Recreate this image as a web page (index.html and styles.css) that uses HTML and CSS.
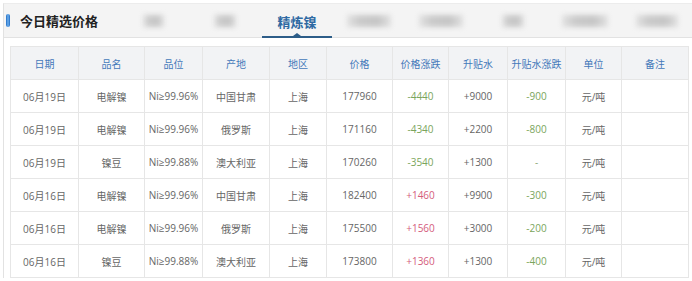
FILE: index.html
```html
<!DOCTYPE html>
<html lang="zh-CN">
<head>
<meta charset="utf-8">
<title>今日精选价格</title>
<link rel="stylesheet" href="styles.css">
</head>
<body>
<div class="panel">
  <div class="head">
    <span class="bar-icon"></span>
    <h2 class="title">今日精选价格</h2>
    <ul class="tabs">
      <li class="tab"><span class="blur w23"></span></li>
      <li class="tab"><span class="blur w24"></span></li>
      <li class="tab active"><span class="tab-label">精炼镍</span></li>
      <li class="tab"><span class="blur w46"></span></li>
      <li class="tab"><span class="blur w46"></span></li>
      <li class="tab"><span class="blur w24"></span></li>
      <li class="tab"><span class="blur w48"></span></li>
      <li class="tab"><span class="blur w44"></span></li>
    </ul>
  </div>
  <div class="content">
    <table class="price-table">
      <colgroup>
        <col class="c68"><col class="c66"><col class="c58"><col class="c67"><col class="c57"><col class="c66"><col class="c56"><col class="c59"><col class="c58"><col class="c56"><col class="c67">
      </colgroup>
      <thead>
        <tr><th>日期</th><th>品名</th><th>品位</th><th>产地</th><th>地区</th><th>价格</th><th>价格涨跌</th><th>升贴水</th><th>升贴水涨跌</th><th>单位</th><th>备注</th></tr>
      </thead>
      <tbody>
        <tr><td>06月19日</td><td>电解镍</td><td>Ni≥99.96%</td><td>中国甘肃</td><td>上海</td><td>177960</td><td class="down">-4440</td><td>+9000</td><td class="down">-900</td><td>元/吨</td><td></td></tr>
        <tr><td>06月19日</td><td>电解镍</td><td>Ni≥99.96%</td><td>俄罗斯</td><td>上海</td><td>171160</td><td class="down">-4340</td><td>+2200</td><td class="down">-800</td><td>元/吨</td><td></td></tr>
        <tr><td>06月19日</td><td>镍豆</td><td>Ni≥99.88%</td><td>澳大利亚</td><td>上海</td><td>170260</td><td class="down">-3540</td><td>+1300</td><td class="flat">-</td><td>元/吨</td><td></td></tr>
        <tr><td>06月16日</td><td>电解镍</td><td>Ni≥99.96%</td><td>中国甘肃</td><td>上海</td><td>182400</td><td class="up">+1460</td><td>+9900</td><td class="down">-300</td><td>元/吨</td><td></td></tr>
        <tr><td>06月16日</td><td>电解镍</td><td>Ni≥99.96%</td><td>俄罗斯</td><td>上海</td><td>175500</td><td class="up">+1560</td><td>+3000</td><td class="down">-200</td><td>元/吨</td><td></td></tr>
        <tr><td>06月16日</td><td>镍豆</td><td>Ni≥99.88%</td><td>澳大利亚</td><td>上海</td><td>173800</td><td class="up">+1360</td><td>+1300</td><td class="down">-400</td><td>元/吨</td><td></td></tr>
      </tbody>
    </table>
  </div>
</div>
</body>
</html>
```
FILE: styles.css
```css
html, body {
  margin: 0;
  padding: 0;
  background: #ffffff;
}
body {
  font-family: "Open Sans", "Noto Sans CJK SC", sans-serif;
  color: #666;
  overflow: hidden;
}
.panel {
  margin: 3px 0 0 3px;
  border-left: 1px solid #e2e2e2;
  border-top: 1px solid #ececec;
}
.head {
  display: flex;
  align-items: center;
  height: 33px;
  background: #f4f4f4;
  border-bottom: 1px solid #e2e2e2;
}
.bar-icon {
  flex: none;
  width: 4px;
  height: 13px;
  margin-left: 2px;
  border-radius: 2px;
  background: linear-gradient(90deg, #1f6cc4 0%, #6fb0ee 50%, #1f6cc4 100%);
}
.title {
  flex: none;
  width: 97px;
  margin: 0 0 0 10px;
  font-family: "Noto Sans CJK SC", sans-serif;
  font-size: 13px;
  font-weight: bold;
  color: #222;
  line-height: 33px;
}
.tabs {
  display: flex;
  list-style: none;
  margin: 0;
  padding: 0;
  height: 33px;
}
.tab {
  position: relative;
  width: 72px;
  height: 33px;
  display: flex;
  align-items: center;
  justify-content: center;
}
.tab-label {
  font-family: "Noto Sans CJK SC", sans-serif;
  font-size: 13px;
  font-weight: bold;
  color: #2f6aa3;
  margin-top: 1px;
}
.tab.active::after {
  content: "";
  position: absolute;
  left: 1px;
  right: 1px;
  bottom: -1px;
  height: 2px;
  background: #2d5d88;
}
.tab.active::before {
  content: "";
  position: absolute;
  left: 50%;
  bottom: 1px;
  margin-left: -4px;
  border-left: 4px solid transparent;
  border-right: 4px solid transparent;
  border-bottom: 3px solid #2d5d88;
}
.blur {
  display: block;
  height: 12px;
  background: linear-gradient(90deg, #e2e2e2 0%, #cacaca 30%, #c6c6c6 70%, #e2e2e2 100%);
  filter: blur(2.5px);
  margin-top: 1px;
}
.w23 { width: 21px; }
.w24 { width: 22px; }
.w44 { width: 42px; }
.w46 { width: 44px; }
.w48 { width: 46px; }
.content {
  padding: 8px 0 0 6px;
}
.price-table {
  width: 678px;
  table-layout: fixed;
  border-collapse: collapse;
  font-size: 10px;
}
.c68 { width: 68px; }
.c66 { width: 66px; }
.c58 { width: 58px; }
.c67 { width: 67px; }
.c57 { width: 57px; }
.c59 { width: 59px; }
.c56 { width: 56px; }
.price-table th,
.price-table td {
  border: 1px solid #e6e6e6;
  text-align: center;
  padding: 0;
  height: 32px;
  white-space: nowrap;
  overflow: hidden;
}
.price-table th {
  background: #f2f3f5;
  color: #4479ba;
  font-weight: normal;
  font-family: "Noto Sans CJK SC", sans-serif;
}
.price-table td {
  color: #666;
}
.price-table td.down { color: #7aa55c; }
.price-table td.up { color: #d45c7c; }
.price-table td.flat { color: #8aa878; }
```
